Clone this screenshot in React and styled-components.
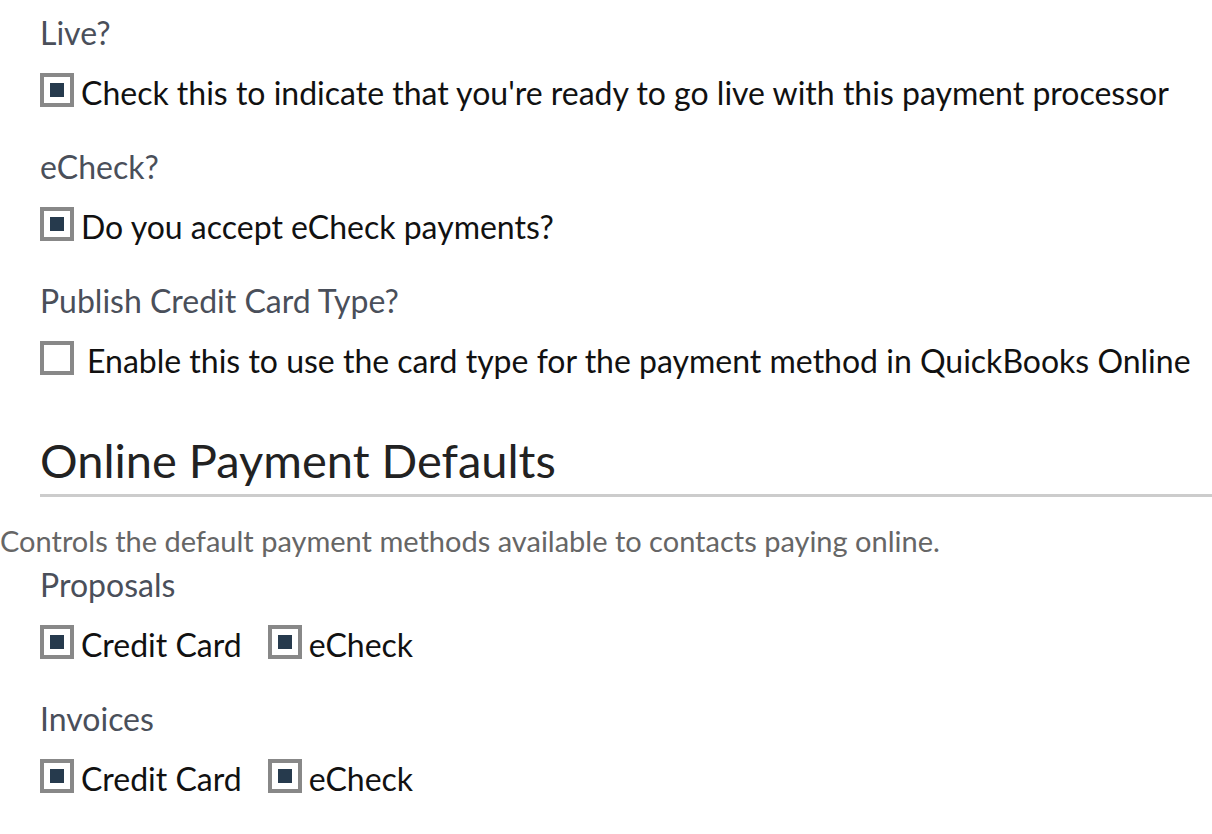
import React from "react";
import styled, { createGlobalStyle } from "styled-components";

const GlobalStyle = createGlobalStyle`
  body {
    margin: 0;
    background: #ffffff;
    font-family: Lato, "Liberation Sans", sans-serif;
  }
`;

const StyledPage = styled.div`
  display: flex;
  flex-direction: column;
  padding-top: 13px;
`;

const StyledSection = styled.div`
  display: flex;
  flex-direction: column;
  padding-left: 40px;
`;

const StyledFieldLabel = styled.div`
  font-size: 32px;
  line-height: 40px;
  color: #4a4f5a;
  margin-bottom: 20px;
`;

const StyledOptionRow = styled.div`
  display: flex;
  align-items: center;
  column-gap: 26px;
  margin-bottom: 34px;
`;

const StyledOption = styled.label`
  display: flex;
  align-items: center;
  column-gap: ${(p) => (p.checked ? 7 : 13)}px;
  font-size: 32px;
  line-height: 40px;
  color: #111111;
`;

const StyledBox = styled.span`
  width: 34px;
  height: 34px;
  box-sizing: border-box;
  border: 4px solid #888888;
  margin-bottom: 6px;
  display: flex;
  justify-content: center;
  align-items: center;
  flex-shrink: 0;
`;

const StyledMark = styled.span`
  width: 14px;
  height: 14px;
  background: #263a4d;
`;

const StyledHeading = styled.h2`
  margin: 17px 0 0 0;
  font-size: 47px;
  font-weight: 400;
  line-height: 56px;
  color: #222222;
  padding-bottom: 6px;
  border-bottom: 3px solid #cccccc;
`;

const StyledDescription = styled.p`
  margin: 26px 0 6px 0;
  font-size: 29px;
  line-height: 36px;
  color: #666666;
`;

function Checkbox({ checked, children }) {
  return (
    <StyledOption checked={checked}>
      <StyledBox>{checked && <StyledMark />}</StyledBox>
      {children}
    </StyledOption>
  );
}

function App() {
  return (
    <StyledPage>
      <GlobalStyle />
      <StyledSection>
        <StyledFieldLabel>Live?</StyledFieldLabel>
        <StyledOptionRow>
          <Checkbox checked>
            Check this to indicate that you're ready to go live with this payment processor
          </Checkbox>
        </StyledOptionRow>
        <StyledFieldLabel>eCheck?</StyledFieldLabel>
        <StyledOptionRow>
          <Checkbox checked>Do you accept eCheck payments?</Checkbox>
        </StyledOptionRow>
        <StyledFieldLabel>Publish Credit Card Type?</StyledFieldLabel>
        <StyledOptionRow>
          <Checkbox>
            Enable this to use the card type for the payment method in QuickBooks Online
          </Checkbox>
        </StyledOptionRow>
        <StyledHeading>Online Payment Defaults</StyledHeading>
      </StyledSection>
      <StyledDescription>
        Controls the default payment methods available to contacts paying online.
      </StyledDescription>
      <StyledSection>
        <StyledFieldLabel>Proposals</StyledFieldLabel>
        <StyledOptionRow>
          <Checkbox checked>Credit Card</Checkbox>
          <Checkbox checked>eCheck</Checkbox>
        </StyledOptionRow>
        <StyledFieldLabel>Invoices</StyledFieldLabel>
        <StyledOptionRow>
          <Checkbox checked>Credit Card</Checkbox>
          <Checkbox checked>eCheck</Checkbox>
        </StyledOptionRow>
      </StyledSection>
    </StyledPage>
  );
}

export default App;
